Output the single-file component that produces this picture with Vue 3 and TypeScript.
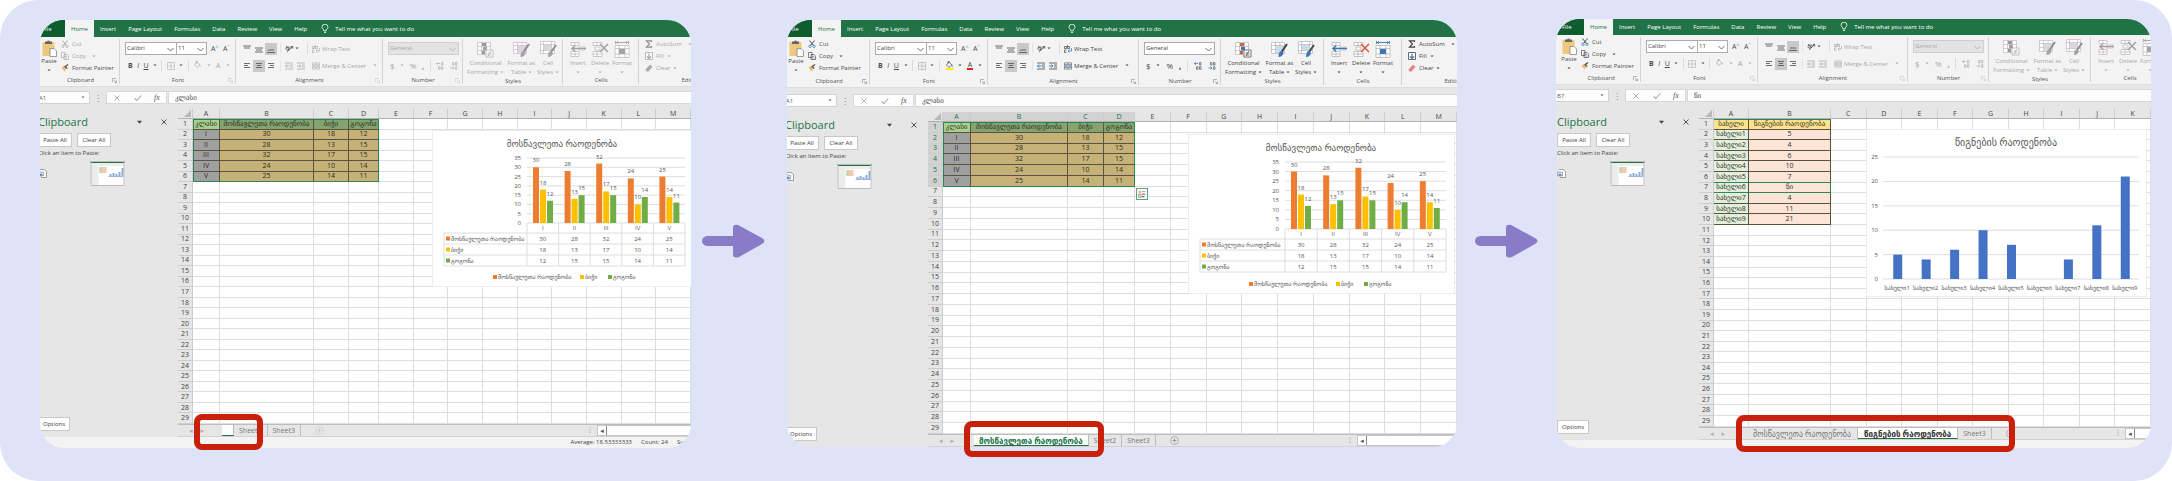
<script setup lang="ts">
interface Series { name: string; color: string; values: number[] }
interface ChartGeo { w: number; h: number; px: number; pw: number; top: number; base: number; head: number; row: number; cx: number }
interface Win {
  id: string
  live: boolean
  clip: boolean
  cell: string
  formula: string
  widths: number[]
  columns: string[]
  fixed: number[]
  data: string[][]
  tabs: { label: string; active: boolean }[]
  status: string[]
  geo: ChartGeo
  kind: 'cluster' | 'single'
}

const pupils = 'მოსწავლეთა რაოდენობა'
const books = 'წიგნების რაოდენობა'
const menu = ['Insert', 'Page Layout', 'Formulas', 'Data', 'Review', 'View', 'Help']

const series: Series[] = [
  { name: pupils, color: '#ed7d31', values: [30, 28, 32, 24, 25] },
  { name: 'ბიჭი', color: '#ffc000', values: [18, 13, 17, 10, 14] },
  { name: 'გოგონა', color: '#70ad47', values: [12, 15, 15, 14, 11] },
]
const classes = ['I', 'II', 'III', 'IV', 'V']
const classData = [
  ['კლასი', pupils, 'ბიჭი', 'გოგონა'],
  ...classes.map((c, i) => [c, ...series.map((s) => String(s.values[i]))]),
]
const bookCounts = ['5', '4', '6', '10', '7', 'წი', '4', '11', '21']
const bookData = [['სახელი', books], ...bookCounts.map((n, i) => ['სახელი' + (i + 1), n])]

const wide = 'ABCDEFGHIJKLM'.split('')
const windows: Win[] = [
  {
    id: 'first', live: false, clip: false, cell: 'A1', formula: 'კლასი',
    widths: [80, 116, 147, 80, 100, 76, 80], columns: wide, fixed: [27, 94, 35, 30], data: classData,
    tabs: [{ label: '', active: true }, { label: 'Sheet2', active: false }, { label: 'Sheet3', active: false }],
    status: ['Average: 18.53333333', 'Count: 24', 'Sum:'],
    geo: { w: 261, h: 157, px: 95, pw: 158, top: 28, base: 93, head: 10, row: 11, cx: 130 }, kind: 'cluster',
  },
  {
    id: 'second', live: true, clip: true, cell: 'A1', formula: 'კლასი',
    widths: [83, 118, 151, 82, 103, 78, 80], columns: wide, fixed: [28, 97, 36, 31], data: classData,
    tabs: [{ label: pupils, active: true }, { label: 'Sheet2', active: false }, { label: 'Sheet3', active: false }],
    status: [],
    geo: { w: 267, h: 160, px: 97, pw: 161, top: 28, base: 95, head: 10, row: 11, cx: 133 }, kind: 'cluster',
  },
  {
    id: 'third', live: false, clip: true, cell: 'B7', formula: 'წი',
    widths: [85, 117, 150, 81, 102, 78, 80], columns: wide.slice(0, 11), fixed: [35, 82], data: bookData,
    tabs: [{ label: pupils, active: false }, { label: books, active: true }, { label: 'Sheet3', active: false }],
    status: [''],
    geo: { w: 281, h: 168, px: 17, pw: 256, top: 28, base: 150, head: 0, row: 0, cx: 140 }, kind: 'single',
  },
]

function cellClass(w: Win, r: number, c: number): string[] {
  const rows = w.data.length
  const cols = w.data[0].length
  if (r >= rows || c >= cols) return []
  const out = ['filled']
  if (w.kind === 'cluster') {
    out.push(r === 0 ? (c === 0 ? 'lime' : 'moss') : c === 0 ? 'slate' : 'sand')
    if (r === 0) out.push('edge-top')
    if (r === rows - 1) out.push('edge-bottom')
    if (c === 0) out.push('edge-left')
    if (c === cols - 1) out.push('edge-right')
  } else {
    out.push(r === 0 ? 'gold' : c === 0 ? 'mint' : 'peach')
    if (r === 0) out.push('edge-top')
    if (r === 6) out.push('edge-bottom')
    if (r === 5) out.push('edge-bottom')
    if (r === 6 && c === 1) out.push('edge-right')
  }
  return out
}
const marked = (w: Win, r: number): boolean => w.id === 'second' && r < w.data.length
const markedCol = (w: Win, c: number): boolean => w.id === 'second' && c < w.data[0].length
const yOf = (g: ChartGeo, v: number, max: number): number => g.base - ((g.base - g.top) * v) / max
const ticks = (max: number): number[] => Array.from({ length: max / 5 + 1 }, (_, i) => i * 5)
const legendX = [61, 148, 176]
</script>

<template>
  <main class="board">
    <svg class="sprite" aria-hidden="true">
      <symbol id="paste" viewBox="0 0 16 17"><rect x="1" y="2" width="12" height="14" fill="#efc87f" /><path d="M3.500 4V1.500h2q1.500-2 3 0h2V4z" fill="#666" /><path d="M8.500 8.500h4l2.500 2.500v5.500H8.500z" fill="#fff" stroke="#777" stroke-width=".7" /></symbol>
      <symbol id="cut" viewBox="0 0 8 8"><path d="M1.500.5 5.500 5.500M6.500.5 2.500 5.500" stroke="currentColor" fill="none" /><circle cx="1.900" cy="6.300" r="1.200" fill="none" stroke="var(--blue)" stroke-width=".8" /><circle cx="6" cy="6.300" r="1.200" fill="none" stroke="var(--blue)" stroke-width=".8" /></symbol>
      <symbol id="copy" viewBox="0 0 8 8"><path d="M.5.500h3.500v5H.5zM3 2.500h3l1.500 1.500v3.500H3z" fill="#fafafa" stroke="currentColor" stroke-width=".7" /><path d="M4 4.500h2M4 6h2.500" stroke="var(--blue)" stroke-width=".7" /></symbol>
      <symbol id="brush" viewBox="0 0 8 8"><path d="M.5 3.500 3 2l2.500 2.500L3.500 7.500z" fill="#f0b765" /><path d="M3.500 3 7 .5M4 2l2.200 2.600" stroke="#555" stroke-width="1.300" /></symbol>
      <symbol id="chev" viewBox="0 0 8 5"><path d="M.5.700 4 4.200 7.500.700" fill="none" stroke="currentColor" stroke-width=".9" /></symbol>
      <symbol id="tri" viewBox="0 0 4 3"><path d="M.5.500h3L2 2.200z" fill="currentColor" /></symbol>
      <symbol id="launch" viewBox="0 0 5 5"><path d="M.5 4V.500H4M2 2l2.500 2.500M4.500 2.500v2h-2" fill="none" stroke="currentColor" stroke-width=".6" /></symbol>
      <symbol id="lines-top" viewBox="0 0 8 8"><path d="M0 1h8M1 3h6" stroke="currentColor" stroke-width=".8" /></symbol>
      <symbol id="lines-mid" viewBox="0 0 8 8"><path d="M0 3h8M1 5h6M0 7h8" stroke="currentColor" stroke-width=".8" /></symbol>
      <symbol id="lines-low" viewBox="0 0 8 8"><path d="M1 5h6M0 7.500h8" stroke="currentColor" stroke-width=".8" /></symbol>
      <symbol id="left" viewBox="0 0 8 8"><path d="M1 1.500h6M1 3.500h4M1 5.500h6" stroke="currentColor" stroke-width=".8" /></symbol>
      <symbol id="center" viewBox="0 0 8 8"><path d="M1 1.500h6M2 3.500h4M1 5.500h6" stroke="currentColor" stroke-width=".8" /></symbol>
      <symbol id="right" viewBox="0 0 8 8"><path d="M1 1.500h6M3 3.500h4M1 5.500h6" stroke="currentColor" stroke-width=".8" /></symbol>
      <symbol id="orient" viewBox="0 0 9 8"><circle cx="2.500" cy="4" r="1.500" fill="none" stroke="currentColor" stroke-width=".8" /><path d="M1 1.500 4.500 5.500M4 2l2 2M2 7.500 7.500 2M5.800 2h2v2" fill="none" stroke="currentColor" stroke-width=".8" /></symbol>
      <symbol id="indent-out" viewBox="0 0 8 8"><path d="M0 1h8M5 3h3M5 5h3M0 7h8" stroke="currentColor" stroke-width=".8" /><path d="M4.500 4H.5M2 2.500.5 4 2 5.500" fill="none" stroke="var(--blue)" /></symbol>
      <symbol id="indent-in" viewBox="0 0 8 8"><path d="M0 1h8M5 3h3M5 5h3M0 7h8" stroke="currentColor" stroke-width=".8" /><path d="M0 4h4M2.500 2.500 4 4 2.500 5.500" fill="none" stroke="var(--blue)" /></symbol>
      <symbol id="wrap" viewBox="0 0 8 8"><path d="M.5 3.500V1.500h2v2zM3.500 0v3.500h2v-2h-2M2.500 5h-2v2.500h2" fill="none" stroke="currentColor" stroke-width=".7" /><path d="M7.500 3v3H4M5.500 4.500 4 6l1.500 1.500" fill="none" stroke="var(--blue)" stroke-width=".8" /></symbol>
      <symbol id="merge" viewBox="0 0 9 8"><path d="M.5.500h8v7h-8zM.5 2.500h8M.5 5.500h8M4.500.500v2M4.500 5.500v2" fill="none" stroke="currentColor" stroke-width=".6" /><path d="M1.500 4h6M3 3 1.500 4 3 5M6 3l1.500 1L6 5" fill="none" stroke="var(--blue)" stroke-width=".8" /></symbol>
      <symbol id="borders" viewBox="0 0 8 8"><path d="M.5.500h7v7h-7zM4 .5v7M.5 4h7" fill="none" stroke="var(--grid)" stroke-width=".7" /></symbol>
      <symbol id="bucket" viewBox="0 0 9 9"><path d="M4 1 7 4 4 6.500 1.500 4zM3 2.500V.500h1.500" fill="none" stroke="currentColor" stroke-width=".7" /><path d="M7 3.500q2 1 1 3z" fill="var(--blue)" /><path d="M.500 8h8" stroke="var(--yellow)" stroke-width="2" /></symbol>
      <symbol id="dec-up" viewBox="0 0 8 8"><path d="M4 1.500H.5M2 .3.500 1.500 2 2.800" fill="none" stroke="var(--blue)" stroke-width=".8" /><path d="M5.500.5h1.500v2.500H5.500zM2.500 4.700H4v2.600H2.500zM5.500 4.700h1.500v2.600H5.500z" fill="none" stroke="currentColor" stroke-width=".6" /></symbol>
      <symbol id="dec-down" viewBox="0 0 8 8"><path d="M.5 6H4M2.500 4.800 4 6 2.500 7.300" fill="none" stroke="var(--blue)" stroke-width=".8" /><path d="M2.500.5H4v2.500H2.500zM5.500.5h1.500v2.500H5.500zM5.500 4.700h1.500v2.600H5.500z" fill="none" stroke="currentColor" stroke-width=".6" /></symbol>
      <symbol id="cond" viewBox="0 0 17 17"><path d="M.5 1.500h13v12H.5zM.5 5.500h13M.5 9.500h13M4.500 1.500v12M9.500 1.500v12" fill="#fff" stroke="var(--grid)" stroke-width=".7" /><path d="M5 2h4v3H5zM5 9.800h3v3.500H5z" fill="var(--red)" /><path d="M6 5.800h4v3.500H6z" fill="var(--steel)" /><path d="M9 9h7v7H9z" fill="#fff" stroke="currentColor" stroke-width=".7" /><path d="M10.500 12h4M10.500 14h4M14 10l-3 5" stroke="currentColor" stroke-width=".7" /></symbol>
      <symbol id="fmt" viewBox="0 0 17 17"><path d="M.5 1.500h13v11H.5zM.5 4.500h13M.5 8.500h13M4.500 1.500v11M9 1.500v11" fill="#fff" stroke="var(--grid)" stroke-width=".7" /><path d="M5 5h8v7H5z" fill="var(--pale)" /><path d="M16 3 10.500 11" stroke="var(--dark)" stroke-width="2" /><path d="M10.500 10q-3 0-3 6 4 0 5-4z" fill="var(--steel)" /></symbol>
      <symbol id="style" viewBox="0 0 17 17"><path d="M.5.500h14v12H.5zM.5 3.500h14M.5 9.500h14M3.500.500v12M11.500.500v12" fill="#fff" stroke="var(--grid)" stroke-width=".7" /><path d="M4 4h7v5H4z" fill="var(--pale)" /><path d="M16 4 11 11" stroke="var(--dark)" stroke-width="2" /><path d="M11 10q-3 0-3 6 4 0 5-4z" fill="var(--steel)" /></symbol>
      <symbol id="insert" viewBox="0 0 17 17"><path d="M1 1.500h8v3H1zM1 10.500h8v5H1zM5 1.500v3M1 13h8M5 10.500v5M9 6h6v3H9z" fill="#fff" stroke="var(--grid)" stroke-width=".8" /><path d="M16 7.500H2M5 4.800 2 7.500l3 2.700" fill="none" stroke="var(--steel)" stroke-width="1.500" /></symbol>
      <symbol id="delete" viewBox="0 0 17 17"><path d="M1 1.500h9v3H1zM1 10.500h9v5H1zM5 1.500v3M1 13h9M5 10.500v5M3 6h5v3H3z" fill="#fff" stroke="var(--grid)" stroke-width=".8" /><path d="M8 3l8 8M16 3l-8 8" stroke="var(--cross)" stroke-width="1.500" /></symbol>
      <symbol id="format" viewBox="0 0 17 17"><path d="M1 4.500h14v12H1zM1 7.500h14M1 13h14M5 4.500v12M11 4.500v12" fill="#fff" stroke="var(--grid)" stroke-width=".8" /><path d="M5 8h6v5H5z" fill="var(--steel)" /><path d="M1.500 0v3M14.500 0v3M2 1.500h12M4 .3 2.500 1.500 4 2.800M12 .3l1.500 1.200L12 2.800" fill="none" stroke="var(--steel)" stroke-width=".9" /></symbol>
      <symbol id="sigma" viewBox="0 0 8 8"><path d="M6.500 2V.800H1.500L4.500 4 1.500 7.200h5V6" fill="none" stroke="var(--dark)" stroke-width="1.200" /></symbol>
      <symbol id="fill" viewBox="0 0 8 8"><path d="M.5.500h7v7h-7z" fill="#fff" stroke="currentColor" stroke-width=".8" /><path d="M4 1.500v5M2 4.500l2 2 2-2" fill="none" stroke="var(--steel)" stroke-width="1.200" /></symbol>
      <symbol id="eraser" viewBox="0 0 8 8"><path d="M.5 5.500 5 .8l2.500 2L3.500 7.500h-2z" fill="var(--pink)" /></symbol>
      <symbol id="bulb" viewBox="0 0 8 10"><path d="M2.800 7V5.800Q1 4.500 1 3.200a3 3 0 0 1 6 0Q7 4.500 5.200 5.800V7zM3 8.500h2" fill="none" stroke="#fff" stroke-width=".8" /></symbol>
      <symbol id="close" viewBox="0 0 8 8"><path d="m1.500 1.500 5 5m0-5-5 5" stroke="currentColor" stroke-width=".9" /></symbol>
      <symbol id="check" viewBox="0 0 8 8"><path d="m.800 4.500 2 2 4.500-5" fill="none" stroke="currentColor" stroke-width="1.100" /></symbol>
      <symbol id="doc" viewBox="0 0 9 9"><path d="M2 .5h4l2.500 2V8.500H3" fill="#fff" stroke="#888" stroke-width=".8" /><path d="M.500 3h5v4h-5z" fill="#cfe0f0" stroke="#888" stroke-width=".6" /><path d="M1 6.500 3 4.500l2 2z" fill="#3f76b5" /></symbol>
      <symbol id="thumb" viewBox="0 0 34 25"><path fill="#fff" d="M0 0h34v25H0z" /><path fill="#217346" d="M0 0h34v2H0z" /><path fill="#ececec" d="M0 2h34v3H0zM0 5h8v20H0z" /><path fill="#eecbb0" d="M9 6h7v6H9z" /><path fill="#b9d5a9" d="M9 6h2v6H9z" /><path fill="#8facd9" d="M19 13h2v2h-2zM22 12h2v3h-2zM25 13h2v2h-2zM28 11h2v4h-2zM31 7h2v8h-2z" /><path d="M18 15.500h15" stroke="#9db4da" /><path fill="none" stroke="#bbb" d="M.5.500h33v24H.5z" /></symbol>
    </svg>

    <template v-for="(w, wi) in windows" :key="w.id">
      <svg v-if="wi > 0" class="arrow" :class="'arrow-' + wi" viewBox="0 0 63 36" aria-hidden="true">
        <path d="M5 13H31V5Q31 1 36 2L60 15Q65 18 60 21L37 34Q31 36 31 31V23H5Q0 22 0 18 0 14 5 13Z" fill="#8a7bc8" />
      </svg>
      <figure class="frame" :class="w.id">
        <div class="window" :class="{ live: w.live, clip: w.clip }">
          <nav class="menu">
            <button class="file">File</button>
            <button class="home">Home</button>
            <button v-for="m in menu" :key="m">{{ m }}</button>
            <button class="tell"><svg class="bulb"><use href="#bulb" /></svg>Tell me what you want to do</button>
          </nav>

          <div class="ribbon">
            <section class="group" :style="{ width: w.widths[0] + 'px' }">
              <div class="clipset">
                <button class="big"><svg class="i17"><use href="#paste" /></svg><span>Paste</span><svg class="tri"><use href="#tri" /></svg></button>
                <div class="stack">
                  <button class="dim"><svg class="i8"><use href="#cut" /></svg>Cut</button>
                  <button class="dim"><svg class="i8"><use href="#copy" /></svg>Copy<svg class="tri far"><use href="#tri" /></svg></button>
                  <button class="on"><svg class="i8"><use href="#brush" /></svg>Format Painter</button>
                </div>
              </div>
              <h2>Clipboard<svg class="launch"><use href="#launch" /></svg></h2>
            </section>

            <section class="group" :style="{ width: w.widths[1] + 'px' }">
              <div class="rows">
                <div class="row font-row">
                  <label class="combo face"><select aria-label="Font"><option>Calibri</option></select><svg class="chev"><use href="#chev" /></svg></label>
                  <label class="combo size"><select aria-label="Font size"><option>11</option></select><svg class="chev"><use href="#chev" /></svg></label>
                  <button class="grow">A<sup>^</sup></button><button class="grow">A<sup>ˇ</sup></button>
                </div>
                <div class="row style-row">
                  <button class="on"><b>B</b></button><button class="on"><i>I</i></button><button class="on"><u>U</u></button><svg class="tri on"><use href="#tri" /></svg>
                  <span class="bar" />
                  <svg class="i8"><use href="#borders" /></svg><svg class="tri on"><use href="#tri" /></svg>
                  <span class="bar" />
                  <svg class="i9"><use href="#bucket" /></svg><svg class="tri"><use href="#tri" /></svg>
                  <button class="ink">A</button><svg class="tri"><use href="#tri" /></svg>
                </div>
              </div>
              <h2>Font<svg class="launch faint"><use href="#launch" /></svg></h2>
            </section>

            <section class="group" :style="{ width: w.widths[2] + 'px' }">
              <div class="rows">
                <div class="row align-row">
                  <button class="sq on" aria-label="Top"><svg class="i8"><use href="#lines-top" /></svg></button>
                  <button class="sq on" aria-label="Middle"><svg class="i8"><use href="#lines-mid" /></svg></button>
                  <button class="sq on picked" aria-label="Bottom"><svg class="i8"><use href="#lines-low" /></svg></button>
                  <span class="bar soft" />
                  <button class="sq on" aria-label="Orientation"><svg class="i9"><use href="#orient" /></svg></button><svg class="tri on"><use href="#tri" /></svg>
                  <span class="bar push" />
                  <button class="wide"><svg class="i8"><use href="#wrap" /></svg>Wrap Text</button>
                </div>
                <div class="row align-row">
                  <button class="sq on" aria-label="Left"><svg class="i8"><use href="#left" /></svg></button>
                  <button class="sq on picked" aria-label="Center"><svg class="i8"><use href="#center" /></svg></button>
                  <button class="sq on" aria-label="Right"><svg class="i8"><use href="#right" /></svg></button>
                  <span class="bar soft" />
                  <button class="sq" aria-label="Decrease indent"><svg class="i8"><use href="#indent-out" /></svg></button>
                  <button class="sq" aria-label="Increase indent"><svg class="i8"><use href="#indent-in" /></svg></button>
                  <span class="bar last" />
                  <button class="wide"><svg class="i8"><use href="#merge" /></svg>Merge &amp; Center<svg class="tri far"><use href="#tri" /></svg></button>
                </div>
              </div>
              <h2>Alignment<svg class="launch faint"><use href="#launch" /></svg></h2>
            </section>

            <section class="group" :style="{ width: w.widths[3] + 'px' }">
              <div class="rows">
                <div class="row"><label class="combo number"><select aria-label="Number format" :disabled="!w.live"><option>General</option></select><svg class="chev"><use href="#chev" /></svg></label></div>
                <div class="row number-row">
                  <button>$</button><svg class="tri"><use href="#tri" /></svg><button>%</button><button><b>,</b></button><span class="bar" />
                  <button aria-label="More decimals"><svg class="i8"><use href="#dec-up" /></svg></button><button aria-label="Fewer decimals"><svg class="i8"><use href="#dec-down" /></svg></button>
                </div>
              </div>
              <h2>Number<svg class="launch faint"><use href="#launch" /></svg></h2>
            </section>

            <section class="group" :style="{ width: w.widths[4] + 'px' }">
              <div class="bigs">
                <button class="big c1"><svg class="i17"><use href="#cond" /></svg><span>Conditional</span><span>Formatting<svg class="tri"><use href="#tri" /></svg></span></button>
                <button class="big c2"><svg class="i17"><use href="#fmt" /></svg><span>Format as</span><span>Table<svg class="tri"><use href="#tri" /></svg></span></button>
                <button class="big c3"><svg class="i17"><use href="#style" /></svg><span>Cell</span><span>Styles<svg class="tri"><use href="#tri" /></svg></span></button>
              </div>
              <h2>Styles</h2>
            </section>

            <section class="group" :style="{ width: w.widths[5] + 'px' }">
              <div class="bigs">
                <button class="big c4"><svg class="i17"><use href="#insert" /></svg><span>Insert</span><svg class="tri"><use href="#tri" /></svg></button>
                <button class="big c4"><svg class="i17"><use href="#delete" /></svg><span>Delete</span><svg class="tri"><use href="#tri" /></svg></button>
                <button class="big c4"><svg class="i17"><use href="#format" /></svg><span>Format</span><svg class="tri"><use href="#tri" /></svg></button>
              </div>
              <h2>Cells</h2>
            </section>

            <section class="group edit" :style="{ width: w.widths[6] + 'px' }">
              <div class="stack">
                <button><svg class="i8"><use href="#sigma" /></svg>AutoSum<svg class="tri far"><use href="#tri" /></svg></button>
                <button><svg class="i8"><use href="#fill" /></svg>Fill<svg class="tri"><use href="#tri" /></svg></button>
                <button><svg class="i8"><use href="#eraser" /></svg>Clear<svg class="tri"><use href="#tri" /></svg></button>
              </div>
              <h2>Editing</h2>
            </section>
          </div>

          <div class="formula">
            <label class="name"><input :value="w.cell" aria-label="Name box" /><svg class="tri"><use href="#tri" /></svg></label>
            <span class="dots">⋮</span>
            <div class="fx">
              <button aria-label="Cancel"><svg class="i8"><use href="#close" /></svg></button>
              <button aria-label="Enter"><svg class="i8"><use href="#check" /></svg></button>
              <button class="fn"><i>fx</i></button>
            </div>
            <input class="entry" :value="w.formula" aria-label="Formula" />
          </div>

          <div class="body">
            <aside class="pane">
              <header><h1>Clipboard</h1><svg class="drop"><use href="#tri" /></svg><svg class="i8"><use href="#close" /></svg></header>
              <div class="actions"><button>Paste All</button><button>Clear All</button></div>
              <p>Click an Item to Paste:</p>
              <div class="item"><svg class="i9"><use href="#doc" /></svg><svg class="thumb"><use href="#thumb" /></svg></div>
              <button class="options">Options</button>
            </aside>

            <div class="sheet">
              <div class="canvas">
                <table>
                  <colgroup>
                    <col class="nums" />
                    <col v-for="(c, ci) in w.columns" :key="c" :style="w.fixed[ci] ? { width: w.fixed[ci] + 'px' } : undefined" />
                  </colgroup>
                  <thead>
                    <tr><th class="corner"><span /></th><th v-for="(c, ci) in w.columns" :key="c" :class="{ marked: markedCol(w, ci) }">{{ c }}</th></tr>
                  </thead>
                  <tbody>
                    <tr v-for="r in 29" :key="r">
                      <th :class="{ marked: marked(w, r - 1) }">{{ r }}</th>
                      <td v-for="(c, ci) in w.columns" :key="c" :class="cellClass(w, r - 1, ci)">{{ w.data[r - 1]?.[ci] }}</td>
                    </tr>
                  </tbody>
                </table>

                <span v-if="w.id === 'second'" class="quick"><svg viewBox="0 0 12 12"><path d="M2 2h3v3H2z" fill="#f0b36b" /><path d="M2 6h3v4H2zM6 3h4" stroke="#999" fill="#ddd" /><path d="M6 6h4" stroke="#d9604c" stroke-width="1.500" /><path d="M6 9h3" stroke="#3c74c0" stroke-width="1.500" /></svg></span>

                <svg class="chart" :width="w.geo.w" :height="w.geo.h" :viewBox="`0 0 ${w.geo.w} ${w.geo.h}`">
                  <rect x="0" y="0" :width="w.geo.w" :height="w.geo.h" fill="#fff" stroke="#dcdcdc" />
                  <template v-if="w.kind === 'cluster'">
                    <text class="title" :x="w.geo.cx" y="17">{{ pupils }}</text>
                    <g v-for="t in ticks(35)" :key="t">
                      <path :d="`M${w.geo.px} ${yOf(w.geo, t, 35)}h${w.geo.pw}`" stroke="#dedede" />
                      <text class="tick" :x="w.geo.px - 6" :y="yOf(w.geo, t, 35) + 2">{{ t }}</text>
                    </g>
                    <g v-for="(s, si) in series" :key="s.name">
                      <template v-for="(v, vi) in s.values" :key="vi">
                        <rect :x="w.geo.px + (w.geo.pw / 5) * vi + 6 + si * 7" :y="yOf(w.geo, v, 35)" width="6" :height="w.geo.base - yOf(w.geo, v, 35)" :fill="s.color" />
                        <text class="mid" :x="w.geo.px + (w.geo.pw / 5) * vi + 9 + si * 7" :y="yOf(w.geo, v, 35) - 5">{{ v }}</text>
                        <text class="mid" :x="w.geo.px + (w.geo.pw / 5) * (vi + 0.5)" :y="w.geo.base + w.geo.head + w.geo.row * (si + 0.5) + 2">{{ v }}</text>
                      </template>
                      <rect x="14" :y="w.geo.base + w.geo.head + w.geo.row * (si + 0.5) - 2" width="4" height="4" :fill="s.color" />
                      <text x="19" :y="w.geo.base + w.geo.head + w.geo.row * (si + 0.5) + 2">{{ s.name }}</text>
                      <path :d="`M12 ${w.geo.base + w.geo.head + w.geo.row * si}H${w.geo.px + w.geo.pw}`" stroke="#dedede" />
                      <rect :x="legendX[si]" :y="w.geo.h - 12" width="4" height="4" :fill="s.color" />
                      <text :x="legendX[si] + 5" :y="w.geo.h - 8">{{ s.name }}</text>
                    </g>
                    <path :d="`M12 ${w.geo.base + w.geo.head}V${w.geo.base + w.geo.head + w.geo.row * 3}H${w.geo.px + w.geo.pw}`" fill="none" stroke="#dedede" />
                    <path v-for="n in 6" :key="n" :d="`M${w.geo.px + (w.geo.pw / 5) * (n - 1)} ${w.geo.base}v${w.geo.head + w.geo.row * 3}`" stroke="#dedede" />
                    <text v-for="(c, ci) in classes" :key="c" class="mid" :x="w.geo.px + (w.geo.pw / 5) * (ci + 0.5)" :y="w.geo.base + 7">{{ c }}</text>
                  </template>
                  <template v-else>
                    <text class="title" :x="w.geo.cx" y="17">{{ books }}</text>
                    <g v-for="t in ticks(25)" :key="t">
                      <path :d="`M${w.geo.px} ${yOf(w.geo, t, 25)}h${w.geo.pw}`" stroke="#dedede" />
                      <text class="tick" :x="w.geo.px - 5" :y="yOf(w.geo, t, 25) + 2">{{ t }}</text>
                    </g>
                    <template v-for="(n, ni) in bookCounts" :key="ni">
                      <rect :x="w.geo.px + (w.geo.pw / 9) * (ni + 0.5) - 4" :y="yOf(w.geo, Number(n) || 0, 25)" width="9" :height="w.geo.base - yOf(w.geo, Number(n) || 0, 25)" fill="#4472c4" />
                      <text class="mid" :x="w.geo.px + (w.geo.pw / 9) * (ni + 0.5)" y="161">{{ 'სახელი' + (ni + 1) }}</text>
                    </template>
                  </template>
                </svg>
              </div>

              <div class="tabs">
                <span class="steps"><span>◂</span><span>▸</span></span>
                <button v-for="(t, ti) in w.tabs" :key="ti" :class="{ active: t.active, named: !t.label.startsWith('Sheet') }" :aria-label="t.label || 'Sheet1'">{{ t.label }}</button>
                <span class="add"><svg viewBox="0 0 9 9"><circle cx="4.500" cy="4.500" r="4" fill="none" stroke="currentColor" stroke-width=".7" /><path d="M2.500 4.500h4M4.500 2.500v4" stroke="currentColor" /></svg></span>
                <span class="grip">⋮</span>
                <span class="scroll"><span>◂</span></span>
              </div>
            </div>
          </div>

          <footer v-if="w.status.length" class="status"><span v-for="s in w.status" :key="s">{{ s }}</span></footer>
        </div>
        <span class="ring" />
      </figure>
    </template>
  </main>
</template>

<style>
body { margin: 0; background: #fff; }
</style>

<style scoped>
* { box-sizing: border-box; }
.board {
  display: grid;
  grid-template-columns: 651fr 96px 670fr 99px 595fr;
  align-items: start;
  padding: 20px 21px 33px 40px;
  background: #dfe3f8;
  border-radius: 38px;
  overflow: hidden;
  font: 6px/8px "Open Sans", "Noto Sans", "DejaVu Sans", sans-serif;
  color: #444;
}
.sprite { position: absolute; width: 0; height: 0; }
button, input, select { font: inherit; color: inherit; background: none; border: 0; padding: 0; margin: 0; border-radius: 0; appearance: none; }
button { display: flex; align-items: center; white-space: nowrap; }
svg { flex: none; display: block; }
h1, h2, p, figure { margin: 0; font-weight: 400; }
.arrow { align-self: center; width: 63px; height: 36px; margin-top: 14px; }
.arrow-1 { margin-left: 11px; }
.arrow-2 { margin-left: 18px; }
.frame { position: relative; min-width: 0; }
.window {
  --blue: #b4b4b4; --red: #9a9a9a; --steel: #a3a3a3; --pale: #dcd6dc; --grid: #c3b8c3; --dark: #8d8d8d; --cross: #a0a0a0; --pink: #a8a8a8; --yellow: transparent; --off: #a8a8a8;
  --rib: 1px; --shift: -2px;
  overflow: hidden; border-radius: 24px; background: #e6e6e6;
}
.live { --blue: #3f7fbf; --red: #d3603f; --steel: #3b78b4; --pale: #c8dcef; --grid: #b5b5b5; --dark: #444; --cross: #d9573b; --pink: #e58093; --yellow: #ffee00; --off: #444; }
.third .window { --rib: 5px; --shift: 1px; margin-top: -1px; }

.menu { display: flex; height: 17px; background: #217346; color: #fff; }
.menu button { padding: 0 6px; }
.menu .file { width: 25px; padding: 0 0 0 2px; background: #0f5c2f; }
.third .file { width: 28px; padding-left: 6px; }
.third .menu { height: 16px; }
.menu .home { background: #f3f3f3; color: #217346; }
.menu .tell { padding-left: 8px; gap: 6px; }
.bulb { width: 8px; height: 10px; }

.ribbon { display: flex; height: 50px; padding-left: var(--rib); background: #f3f3f3; color: var(--off); border-bottom: 1px solid #dedede; overflow: hidden; }
.second .ribbon { height: 51px; }
.group { flex: none; display: flex; flex-direction: column; justify-content: space-between; position: relative; padding-top: 1px; }
.group:first-child { margin-left: -1px; padding-left: 1px; }
.third .group:first-child { margin-left: -5px; padding-left: 5px; }
.group::after { content: ""; position: absolute; right: 0; top: 2px; bottom: 2px; width: 1px; background: #d4d4d4; }
.group h2 { height: 10px; font-size: 6px; line-height: 8px; text-align: center; color: #555; position: relative; }
.group h2 .launch { position: absolute; right: 3px; top: 2px; color: #888; }
.window:not(.live) h2 .faint { color: #c8c8c8; }
.launch { width: 5px; height: 5px; }
.i8 { width: 8px; height: 8px; }
.i9 { width: 9px; height: 9px; }
.i17 { width: 17px; height: 17px; }
.tri { width: 4px; height: 3px; margin-left: 2px; }
.far { margin-left: 6px; }
.on { color: #4c4c4c; }
.clipset { display: flex; gap: 4px; }
.clipset .big { width: 16px; margin-top: 2px; color: #4c4c4c; }
.stack { display: grid; grid-template-rows: repeat(3, 12px); align-content: start; }
.stack button { gap: 3px; }
.stack .tri { margin-left: 0; }
.stack .far { margin-left: 3px; }
.clip .dim { color: #4c4c4c; --blue: #3f7fbf; }
.big { flex-direction: column; line-height: 9px; }
.big > span { display: flex; align-items: center; }
.big > .tri { margin: 3px 0 0; }
.bigs { display: flex; padding-top: 3px; }
.c1 { width: 45px; }
.c2 { width: 27px; }
.c3 { width: 26px; }
.c4 { width: 22px; }
.group .bigs .i17 { margin-bottom: 1px; }
.group .c4:first-child { margin-left: 4px; }
.edit { padding-left: 6px; }
.edit h2 { padding-left: 18px; }

.rows { display: grid; gap: 4px; padding: 4px 0 0 5px; }
.row { display: flex; align-items: center; height: 13px; }
.combo { position: relative; height: 13px; border: 1px solid #ababab; background: #fff; color: #444; }
.combo select { width: 100%; height: 11px; padding-left: 1px; line-height: 11px; display: block; opacity: 1; }
.combo .chev { position: absolute; right: 2px; top: 4px; width: 7px; height: 5px; pointer-events: none; }
.face { width: 52px; }
.size { width: 31px; margin-left: -1px; }
.number { width: 71px; }
.window:not(.live) .number { background: #e3e3e3; border-color: #cfcfcf; color: #a8a8a8; }
.grow { margin-left: 4px; width: 8px; font-size: 7px; color: #4c4c4c; align-items: flex-start; }
.grow sup { font-size: 5px; line-height: 5px; color: #3f7fbf; }
.style-row { justify-content: space-between; padding: 0 6px 0 3px; font-size: 7px; }
.style-row .tri { margin: 0; }
.bar { width: 1px; height: 11px; background: #dcdcdc; }
.live .ink { border-bottom: 2px solid #e02418; line-height: 7px; }
.ink { padding: 0 1px; }
.sq { width: 12px; height: 12px; justify-content: center; }
.picked { background: #c9c9c9; }
.align-row .soft { background: #e6e6e6; margin: 0 2px 0 3px; }
.align-row .tri { margin-left: 0; }
.align-row .push { margin-left: 8px; }
.align-row .last { margin-left: 0; background: transparent; }
.align-row .wide { margin-left: 4px; gap: 2px; }
.align-row .far { margin-left: 5px; }
.number-row { font-size: 8px; justify-content: space-between; padding: 0 5px 0 2px; }
.number-row .tri { margin: 0; }

.formula { display: flex; height: 17px; padding-top: 4px; }
.second .formula { height: 19px; padding-top: 6px; }
.third .formula { height: 19px; padding-top: 4px; }
.formula > * { height: 13px; }
.name { display: flex; align-items: center; width: 50px; padding-right: 4px; background: #fdfdfd; border: 1px solid #d2d2d2; border-left: 0; color: #666; }
.name input { width: 100%; min-width: 0; height: 11px; margin-left: -1px; }
.third .name { width: 53px; }
.third .name input { margin-left: 1px; }
.dots { width: 16px; text-align: center; line-height: 13px; color: #888; font-size: 8px; }
.fx { display: flex; align-items: center; justify-content: space-around; width: 61px; background: #fdfdfd; border: 1px solid #d8d8d8; color: #a6a6a6; }
.fn { color: #555; font: 8px/10px "Liberation Serif", serif; }
.entry { flex: 1; min-width: 0; margin-left: 1px; padding-left: 6px; background: #fdfdfd; border: 1px solid #d8d8d8; border-right: 0; font-size: 7px; }

.body { display: flex; }
.pane { flex: none; width: 138px; display: flex; flex-direction: column; align-items: flex-start; padding: 8px 0 6px; }
.second .pane { width: 141px; }
.third .pane { width: 143px; }
.pane > * { margin-left: var(--shift); }
.pane header { display: flex; align-items: center; width: 100%; height: 20px; }
.pane h1 { font-size: 11px; line-height: 20px; color: #217346; margin-right: auto; }
.drop { width: 7px; height: 5px; margin-right: 17px; }
.pane header .i8 { margin-right: 8px; }
.third .pane header .i8 { margin-right: 10px; }
.actions { display: flex; gap: 5px; margin-top: 1px; }
.actions button, .options { height: 14px; padding: 0 4px; background: #fdfdfd; border: 1px solid #c8c8c8; }
.actions button { width: 34px; justify-content: center; padding: 0; }
.pane p { margin-top: 2px; line-height: 9px; }
.item { display: flex; align-items: center; gap: 43px; margin-top: 3px; }
.third .item { gap: 44px; }
.thumb { width: 35px; height: 25px; }
.options { margin-top: auto; }

.sheet { flex: 1; min-width: 0; padding-top: 5px; }
.canvas { position: relative; overflow: hidden; }
table { width: 100%; height: 315px; table-layout: fixed; border-collapse: separate; border-spacing: 0; background: #fff; font-size: 7px; line-height: 8px; color: #333; text-align: center; }
.second table { height: 322px; }
.third table { height: 318px; }
.nums { width: 15px; }
th, td { padding: 0; font-weight: 400; white-space: nowrap; border-right: 1px solid #dedede; border-bottom: 1px solid #dedede; overflow: visible; }
th { background: #e6e6e6; border-color: #cdcdcd; color: #444; overflow: hidden; }
thead th { height: 10px; border-bottom-color: #b0b0b0; }
.corner span { display: block; width: 0; height: 0; margin-left: 6px; border: solid transparent; border-width: 0 0 7px 7px; border-bottom-color: #b8b8b8; }
.marked { background: #d2d2d2; color: #217346; }
.filled { border-color: #5a5344; color: #2b2b2b; }
.lime { background: #a9d18e; }
.moss { background: #84a36e; }
.slate { background: #a0a0a0; }
.sand { background: #c6b277; }
.gold { background: #ffe28c; }
.mint { background: #e2efda; }
.peach { background: #fce4d6; }
.edge-top { box-shadow: inset 0 1px #2c8757; }
.edge-left { box-shadow: inset 1px 0 #2c8757; }
.edge-top.edge-left { box-shadow: inset 1px 1px #2c8757; }
.edge-right { border-right-color: #2c8757; }
.edge-bottom { border-bottom-color: #2c8757; }
.chart { position: absolute; left: 254px; top: 21px; font-size: 6px; fill: #555; }
.second .chart { left: 260px; top: 22px; }
.third .chart { left: 167px; top: 20px; }
.title { font-size: 9px; text-anchor: middle; }
.third .title { font-size: 10px; }
.mid { text-anchor: middle; }
.tick { text-anchor: end; }
.quick { position: absolute; left: 208px; top: 76px; width: 12px; height: 12px; background: #fff; border: 1px solid #5aa37d; }

.tabs { display: flex; align-items: stretch; height: 13px; border-top: 1px solid #bdbdbd; border-bottom: 1px solid #d2d2d2; font-size: 7px; line-height: 9px; color: #777; }
.steps { display: flex; gap: 8px; width: 44px; padding-left: 11px; color: #b0b0b0; line-height: 11px; }
.second .steps { width: 46px; }
.third .steps { width: 48px; }
.tabs button { padding: 0 5px; border-right: 1px solid #bdbdbd; }
.tabs .named { font-size: 8px; }
.third .tabs .named { padding: 0 6px; }
.tabs .active { background: #fff; color: #217346; font-weight: 700; border-bottom: 1px solid #217346; min-width: 12px; }
.third .tabs .active { color: #333; }
.add { width: 9px; margin: 1px auto 0 14px; color: #999; }
.first .add { color: #ccc; }
.grip { width: 10px; text-align: center; }
.scroll { width: 94px; margin-left: 2px; background: #fff; border: 1px solid #c6c6c6; border-right: 0; color: #555; }
.second .scroll { width: 100px; }
.third .scroll { width: 26px; }
.scroll span { display: block; width: 9px; text-align: center; border-right: 1px solid #888; }
.status { display: flex; justify-content: flex-end; gap: 9px; height: 11px; line-height: 11px; background: #f3f3f3; color: #444; }
.third .status { height: 8px; }
.ring { position: absolute; left: 154px; bottom: -2px; width: 69px; height: 36px; border: 6px solid #c9200b; border-radius: 8px; }
.second .ring { left: 177px; bottom: -10px; width: 140px; }
.third .ring { left: 180px; bottom: -4px; width: 279px; height: 37px; }
</style>
